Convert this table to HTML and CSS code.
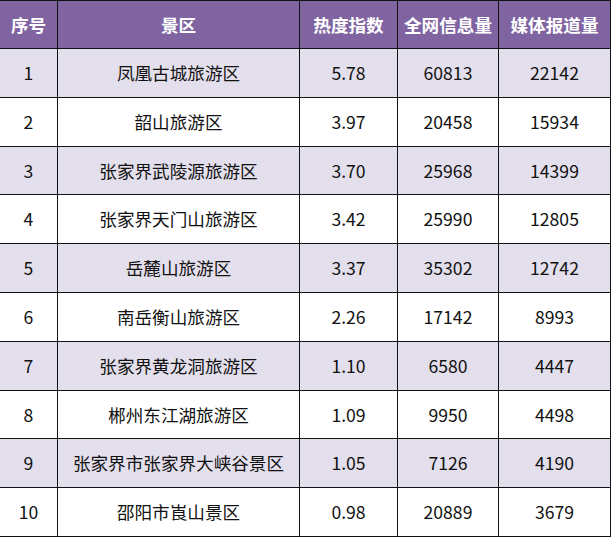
FILE: index.html
```html
<!DOCTYPE html>
<html lang="zh">
<head>
<meta charset="utf-8">
<link rel="stylesheet" href="styles.css">
</head>
<body>
<div class="table">
  <div class="cell head">序号</div><div class="cell head">景区</div><div class="cell head">热度指数</div><div class="cell head">全网信息量</div><div class="cell head">媒体报道量</div>
  <div class="cell odd">1</div><div class="cell odd">凤凰古城旅游区</div><div class="cell odd">5.78</div><div class="cell odd">60813</div><div class="cell odd">22142</div>
  <div class="cell">2</div><div class="cell">韶山旅游区</div><div class="cell">3.97</div><div class="cell">20458</div><div class="cell">15934</div>
  <div class="cell odd">3</div><div class="cell odd">张家界武陵源旅游区</div><div class="cell odd">3.70</div><div class="cell odd">25968</div><div class="cell odd">14399</div>
  <div class="cell">4</div><div class="cell">张家界天门山旅游区</div><div class="cell">3.42</div><div class="cell">25990</div><div class="cell">12805</div>
  <div class="cell odd">5</div><div class="cell odd">岳麓山旅游区</div><div class="cell odd">3.37</div><div class="cell odd">35302</div><div class="cell odd">12742</div>
  <div class="cell">6</div><div class="cell">南岳衡山旅游区</div><div class="cell">2.26</div><div class="cell">17142</div><div class="cell">8993</div>
  <div class="cell odd">7</div><div class="cell odd">张家界黄龙洞旅游区</div><div class="cell odd">1.10</div><div class="cell odd">6580</div><div class="cell odd">4447</div>
  <div class="cell">8</div><div class="cell">郴州东江湖旅游区</div><div class="cell">1.09</div><div class="cell">9950</div><div class="cell">4498</div>
  <div class="cell odd">9</div><div class="cell odd">张家界市张家界大峡谷景区</div><div class="cell odd">1.05</div><div class="cell odd">7126</div><div class="cell odd">4190</div>
  <div class="cell">10</div><div class="cell">邵阳市崀山景区</div><div class="cell">0.98</div><div class="cell">20889</div><div class="cell">3679</div>
</div>
</body>
</html>
```
FILE: styles.css
```css
html, body {
  margin: 0;
  padding: 0;
  background: #ffffff;
}
body {
  width: 612px;
  height: 538px;
  overflow: hidden;
  font-family: "Noto Sans CJK SC", "Noto Sans", sans-serif;
}
.table {
  display: grid;
  width: 610px;
  grid-template-columns: 57px 241px 97px 100px 111px;
  grid-template-rows: 47px repeat(10, 47.8px);
  column-gap: 1px;
  row-gap: 1px;
  background: #111111;
  border-top: 1px solid #111111;
  border-bottom: 1px solid #111111;
  border-right: 1px solid #111111;
  box-sizing: content-box;
}
.cell {
  display: flex;
  align-items: center;
  justify-content: center;
  background: #ffffff;
  color: #111111;
  font-size: 17.6px;
  line-height: 1;
  white-space: nowrap;
}
.cell.odd {
  background: #e4dfec;
}
.cell.head {
  background: #8064a2;
  color: #ffffff;
  font-weight: 700;
}
```
